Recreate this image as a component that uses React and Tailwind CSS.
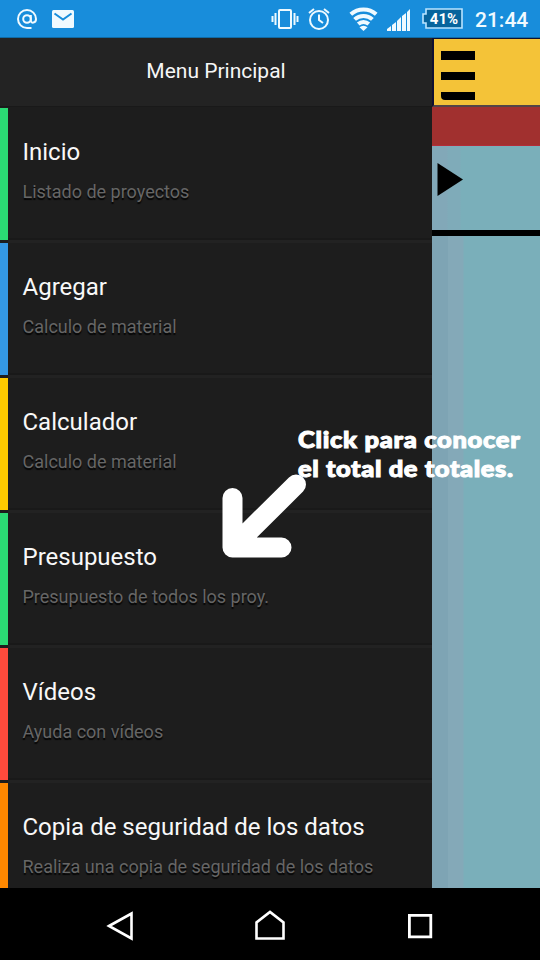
import React from 'react';

const items = [
  { title: 'Inicio', sub: 'Listado de proyectos', bar: 'bg-[#2bdb74]' },
  { title: 'Agregar', sub: 'Calculo de material', bar: 'bg-[#3498e4]' },
  { title: 'Calculador', sub: 'Calculo de material', bar: 'bg-[#fecb00]' },
  { title: 'Presupuesto', sub: 'Presupuesto de todos los proy.', bar: 'bg-[#2bdb74]' },
  { title: 'Vídeos', sub: 'Ayuda con vídeos', bar: 'bg-[#ff4a3c]' },
  { title: 'Copia de seguridad de los datos', sub: 'Realiza una copia de seguridad de los datos', bar: 'bg-[#ff8800]' },
];

function StatusBar() {
  return (
    <header className="flex h-[38px] shrink-0 items-center border-b border-[#0f6ba6] bg-[#188ddb] text-[#f0faff]">
      <svg className="ml-[17px]" width="20" height="20" viewBox="0 0 20 20" fill="none" stroke="#f0faff" strokeWidth="2">
        <circle cx="10" cy="10" r="3.8" />
        <path d="M13.8 6v5.2c0 3.6 5.2 3.2 5.2-1.2a9 9 0 1 0-9 9h4.5" />
      </svg>
      <svg className="ml-[15px]" width="22" height="18" viewBox="0 0 22 18">
        <rect width="22" height="18" rx="1.5" fill="#f0faff" />
        <path d="M2.5 3.5 11 9.5l8.5-6" fill="none" stroke="#188ddb" strokeWidth="2" />
      </svg>
      <svg className="ml-[197px]" width="28" height="22" viewBox="0 0 28 22" fill="none" stroke="#eefaff" strokeWidth="2">
        <rect x="8" y="2" width="12" height="18" rx="1" />
        <path d="M4.5 5v12M1.5 8v6M23.5 5v12M26.5 8v6" />
      </svg>
      <svg className="ml-[8px]" width="24" height="24" viewBox="0 0 24 24" fill="none" stroke="#eefaff" strokeWidth="2">
        <circle cx="12" cy="13" r="9" />
        <path d="M12 7.5V13l4 3M2 6l5-4M22 6l-5-4" />
      </svg>
      <svg className="ml-[18px]" width="29" height="24" viewBox="0 0 29 24" fill="none" stroke="#f0faff" strokeWidth="4">
        <path d="M1.8 7.3a19 19 0 0 1 25.4 0" />
        <path d="M5.6 12.4a13 13 0 0 1 17.8 0" />
        <path d="M9.2 17a8 8 0 0 1 10.6 0" />
        <path d="M14.5 24 10.5 20.2a6 6 0 0 1 8 0Z" fill="#f0faff" stroke="none" />
      </svg>
      <svg className="ml-[9px]" width="24" height="24" viewBox="0 0 24 24" fill="#f0faff">
        <path d="M0 24v-2l4-3v5ZM5 24v-6l4-3v9ZM10 24V14l4-4v14ZM15 24V9l4-3v18ZM20 24V5l3-3v22Z" />
      </svg>
      <div className="relative ml-[11px] h-[21px] w-[41px]">
        <svg width="41" height="21" viewBox="0 0 41 21">
          <path d="M4 1h36v19H4v-5H1V6h3Z" fill="#07649c" stroke="#b9e4ff" strokeWidth="1.6" />
        </svg>
        <span className="absolute inset-0 pl-[3px] text-center text-[15px] leading-[22px] font-bold text-white">41%</span>
      </div>
      <span className="ml-[12px] pt-0.5 text-[21px] leading-6 font-medium whitespace-nowrap">21:44</span>
    </header>
  );
}

function Drawer() {
  return (
    <aside className="flex w-[432px] shrink-0 flex-col overflow-hidden bg-[#1d1d1d]">
      <h1 className="h-[69px] shrink-0 border-b border-[#191919] bg-[#232323] pt-[17px] text-center text-[21px] leading-8 text-[#f6f6f6]">Menu Principal</h1>
      <nav className="shrink-0 pt-px">
        {items.map((item) => (
          <div key={item.title} className="flex h-[135px]">
            <div className={'h-[132px] w-2 ' + item.bar} />
            <div className="flex-1 border-b-[3px] border-[#222222] pt-7 pl-[14.5px] shadow-[inset_0_-2px_0_#191919]">
              <h2 className="text-[24px] leading-8 whitespace-nowrap text-[#f8f8f8]">{item.title}</h2>
              <p className="mt-[12px] text-[18px] leading-6 whitespace-nowrap text-[#666666] [text-shadow:0_2px_1px_#050505]">{item.sub}</p>
            </div>
          </div>
        ))}
      </nav>
    </aside>
  );
}

function Page() {
  return (
    <section className="flex flex-1 flex-col overflow-hidden bg-[#7aafba]">
      <div className="flex h-[69px] shrink-0 flex-col gap-3 border-t border-b-2 border-l-2 border-[#101030] border-b-[#534448] bg-[#f4c338] pt-[12px] pl-[7px]">
        <div className="h-[9px] w-[34px] shrink-0 bg-black" />
        <div className="h-[8px] w-[34px] shrink-0 bg-black" />
        <div className="h-[8px] w-[34px] shrink-0 rounded-bl-[4px] bg-black" />
      </div>
      <div className="h-[39px] shrink-0 border-b border-[#b52b38] bg-[#a1302f]" />
      <div className="h-[90px] shrink-0 border-b-[6px] border-black bg-[linear-gradient(90deg,#82a8b8_0,#82a8b8_15px,#7fabb9_16px,#7fabb9_28px,#7aafba_29px)] pt-[17px] pl-[5px]">
        <svg width="27" height="34" viewBox="0 0 27 34"><path d="M0.5 0v33L26 16.5Z" /></svg>
      </div>
      <div className="flex-1 bg-[linear-gradient(90deg,#7ea4b4_0,#7ea4b4_16px,#84a9b8_16px,#84a9b8_31px,#7aafba_32px)]" />
    </section>
  );
}

function NavigationBar() {
  return (
    <footer className="flex h-[72px] shrink-0 items-center justify-center gap-[118px] bg-black pt-1">
      <svg width="32" height="32" viewBox="0 0 32 32" fill="none" stroke="#fff" strokeWidth="2.6"><path d="M5 16 27.5 3.5v25Z" /></svg>
      <svg width="32" height="32" viewBox="0 0 32 32" fill="none" stroke="#fff" strokeWidth="2.6"><path d="M2.5 28.5v-16L16 2l13.5 10.5v16Z" /></svg>
      <svg width="32" height="32" viewBox="0 0 32 32" fill="none" stroke="#fff" strokeWidth="2.8"><path d="M5.4 5.4h21.4v21.4H5.4Z" /></svg>
    </footer>
  );
}

export default function App() {
  return (
    <main className="relative flex h-[960px] w-[540px] flex-col overflow-hidden bg-black font-['Roboto',sans-serif]">
      <StatusBar />
      <div className="flex h-[850px] shrink-0">
        <Drawer />
        <Page />
      </div>
      <NavigationBar />
      <div className="absolute top-[425px] left-[298px] origin-left scale-x-[1.16] font-['Lato',sans-serif] text-[22px] leading-[29px] font-black whitespace-nowrap text-white [-webkit-text-stroke:1px_white]">
        <p className="tracking-[0.6px]">Click para conocer</p>
        <p className="tracking-[0.5px]">el total de totales.</p>
      </div>
      <svg className="absolute top-[470px] left-[218px]" width="92" height="92" viewBox="0 0 92 92" fill="none" stroke="#fff" strokeWidth="20" strokeLinecap="round" strokeLinejoin="round">
        <path d="M14.5 28v49.5h49M14.5 77.5 78 14.5" />
      </svg>
    </main>
  );
}
